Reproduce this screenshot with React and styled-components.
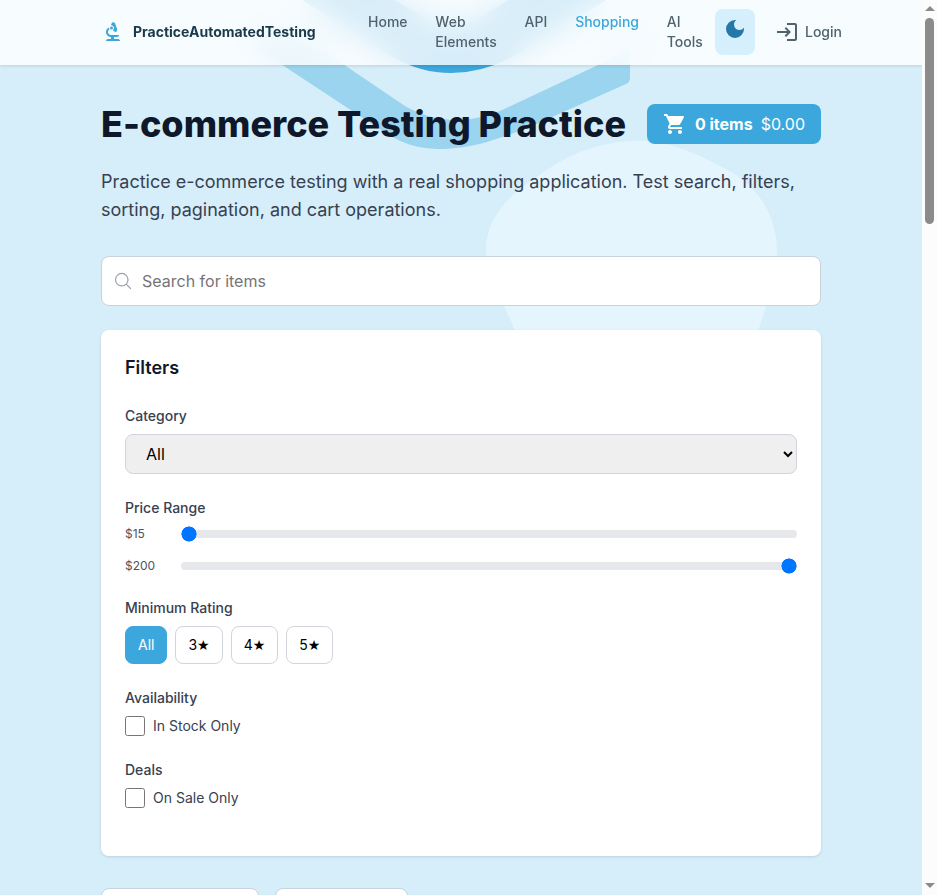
import React, { useState } from 'react';
import styled, { createGlobalStyle } from 'styled-components';
import { MdBiotech, MdDarkMode, MdLogin, MdShoppingCart } from 'react-icons/md';
import { HiOutlineMagnifyingGlass } from 'react-icons/hi2';

// Styling
const GlobalStyle = createGlobalStyle`
    * {
        box-sizing: border-box;
    }
    body {
        margin: 0;
        overflow: hidden;
        font-family: Inter, 'Liberation Sans', sans-serif;
        color: #374151;
    }
    button, input, select {
        font-family: inherit;
    }
    h1, h2, p {
        margin: 0;
    }
`;

const Viewport = styled.div`
    display: flex;
    height: 895px;
    overflow: hidden;
`;

const Page = styled.div`
    position: relative;
    flex: 1;
    min-width: 0;
    overflow: hidden;
    background-color: #d6eef9;
`;

const Backdrop = styled.svg`
    position: absolute;
    top: 0;
    left: 0;
`;

const Header = styled.header`
    position: relative;
    z-index: 2;
    display: flex;
    height: 65px;
    padding: 0 80px 2px 101px;
    background-color: rgba(255, 255, 255, 0.8);
    backdrop-filter: blur(14px);
    box-shadow: 0 1px 3px rgba(0, 0, 0, 0.12);
`;

const Brand = styled.a`
    display: flex;
    align-items: center;
    width: 267px;
    gap: 8px;
    font-size: 14px;
    font-weight: 700;
    color: #1a3a4a;
    svg {
        color: #3ba7dd;
    }
`;

const Nav = styled.nav`
    display: flex;
    gap: 27.8px;
    width: 335px;
    padding-top: 12px;
`;

const NavLink = styled.a`
    width: min-content;
    font-size: 14px;
    font-weight: 500;
    line-height: 20px;
    color: ${props => (props.$active ? '#3ba7dd' : '#4f636e')};
`;

const ThemeButton = styled.button`
    display: flex;
    justify-content: center;
    width: 40px;
    height: 46px;
    margin: 9px 0 0 12px;
    padding: 8px 0;
    border: none;
    border-radius: 8px;
    background-color: #d6effc;
    color: #2478a8;
`;

const LoginLink = styled.a`
    display: flex;
    align-items: center;
    gap: 6px;
    margin-left: 20px;
    font-size: 14px;
    font-weight: 500;
    color: #4f636e;
`;

const Main = styled.main`
    position: relative;
    display: flex;
    flex-direction: column;
    width: 720px;
    margin: 0 auto;
    padding-top: 36px;
`;

const TitleRow = styled.div`
    display: flex;
    align-items: center;
    justify-content: space-between;
    height: 46px;
`;

const Title = styled.h1`
    font-size: 36px;
    font-weight: 800;
    line-height: 46px;
    white-space: nowrap;
    color: #0f172a;
`;

const CartButton = styled.button`
    display: flex;
    align-items: center;
    width: 174px;
    height: 40px;
    padding: 0 16px;
    border: none;
    border-radius: 8px;
    background-color: #3ba7dd;
    color: #fff;
    font-size: 16px;
    white-space: nowrap;
    gap: 8px;
`;

const Intro = styled.p`
    margin-top: 21px;
    font-size: 18px;
    line-height: 28px;
`;

const SearchBox = styled.label`
    display: flex;
    align-items: center;
    gap: 9px;
    height: 50px;
    margin-top: 32px;
    padding: 0 11px;
    border: 1px solid #c9d3da;
    border-radius: 8px;
    background-color: #fff;
    color: #9ca3af;
`;

const SearchInput = styled.input`
    flex: 1;
    padding: 0;
    border: none;
    outline: none;
    font-size: 16px;
    &::placeholder {
        color: #757575;
    }
`;

const FilterCard = styled.section`
    display: flex;
    flex-direction: column;
    height: 526px;
    margin-top: 24px;
    padding: 24px;
    border-radius: 8px;
    background-color: #fff;
    box-shadow: 0 1px 3px rgba(0, 0, 0, 0.12);
`;

const FilterTitle = styled.h2`
    margin-bottom: 24px;
    font-size: 18px;
    font-weight: 600;
    line-height: 28px;
    color: #111827;
`;

const FilterGroup = styled.div`
    display: flex;
    flex-direction: column;
    margin-bottom: 24px;
`;

const Label = styled.span`
    margin-bottom: 8px;
    font-size: 14px;
    font-weight: 500;
    line-height: 20px;
`;

const Select = styled.select`
    height: 40px;
    padding: 0 16px;
    border: 1px solid #d1d5db;
    border-radius: 8px;
    background-color: #efefef;
    font-size: 16px;
    color: #000;
`;

const RangeRow = styled.div`
    display: flex;
    align-items: center;
    height: 16px;
    margin-bottom: ${props => (props.$last ? '0' : '16px')};
    font-size: 12px;
    line-height: 16px;
    color: #4b5563;
`;

const RangeValue = styled.span`
    width: 56px;
`;

const Range = styled.input`
    flex: 1;
    height: 8px;
    margin: 0;
    border-radius: 4px;
    background-color: #e5e7eb;
    appearance: none;
    &::-webkit-slider-thumb {
        appearance: none;
        width: 16px;
        height: 16px;
        border-radius: 50%;
        background: radial-gradient(circle, #0075ff 7.2px, transparent 7.9px);
    }
`;

const Ratings = styled.div`
    display: flex;
    gap: 8px;
`;

const RatingButton = styled.button`
    height: 38px;
    padding: 0 12px;
    border: 1px solid ${props => (props.$active ? '#3ba7dd' : '#d1d5db')};
    border-radius: 8px;
    background-color: ${props => (props.$active ? '#3ba7dd' : '#fff')};
    color: ${props => (props.$active ? '#fff' : '#000')};
    font-size: 14px;
    line-height: 20px;
`;

const Star = styled.span`
    font-family: 'DejaVu Sans', sans-serif;
    line-height: 1;
`;

const CheckRow = styled.label`
    display: flex;
    align-items: center;
    gap: 8px;
    height: 20px;
    font-size: 14px;
    line-height: 20px;
`;

const Checkbox = styled.input`
    width: 20px;
    height: 20px;
    margin: 0;
`;

const SortRow = styled.div`
    display: flex;
    gap: 16px;
    margin-top: 32px;
`;

const SortBox = styled.div`
    width: ${props => props.$width};
    height: 42px;
    border: 1px solid #c9d3da;
    border-radius: 8px;
    background-color: #fff;
`;

const Scrollbar = styled.div`
    display: flex;
    flex-direction: column;
    align-items: center;
    width: 15px;
    padding: 6px 0 7px;
    background-color: #fcfcfc;
`;

const Arrow = styled.div`
    border: 5px solid transparent;
    border-top-width: ${props => (props.$down ? '5px' : '0')};
    border-bottom-width: ${props => (props.$down ? '0' : '5px')};
    border-top-color: #8b8b8b;
    border-bottom-color: #8b8b8b;
`;

const Thumb = styled.div`
    width: 9px;
    height: 206px;
    margin: 7px 0 auto;
    border-radius: 5px;
    background-color: #8b8b8b;
`;

const links = [
    { label: 'Home' },
    { label: 'Web Elements' },
    { label: 'API' },
    { label: 'Shopping', active: true },
    { label: 'AI Tools' },
];

const ratings = [0, 3, 4, 5];

function PageHeader() {
    return (
        <Header>
            <Brand>
                <MdBiotech size={24} />
                PracticeAutomatedTesting
            </Brand>
            <Nav>
                {links.map(link => (
                    <NavLink key={link.label} $active={link.active}>
                        {link.label}
                    </NavLink>
                ))}
            </Nav>
            <ThemeButton aria-label="Toggle theme">
                <MdDarkMode size={24} />
            </ThemeButton>
            <LoginLink>
                <MdLogin size={24} />
                Login
            </LoginLink>
        </Header>
    );
}

function Filters() {
    const [rating, setRating] = useState(0);
    const [min, setMin] = useState(15);
    const [max, setMax] = useState(200);

    return (
        <FilterCard>
            <FilterTitle>Filters</FilterTitle>

            <FilterGroup>
                <Label>Category</Label>
                <Select>
                    <option>All</option>
                </Select>
            </FilterGroup>

            <FilterGroup>
                <Label>Price Range</Label>
                <RangeRow>
                    <RangeValue>${min}</RangeValue>
                    <Range type="range" min="15" max="200" value={min} onChange={e => setMin(e.target.value)} />
                </RangeRow>
                <RangeRow $last>
                    <RangeValue>${max}</RangeValue>
                    <Range type="range" min="15" max="200" value={max} onChange={e => setMax(e.target.value)} />
                </RangeRow>
            </FilterGroup>

            <FilterGroup>
                <Label>Minimum Rating</Label>
                <Ratings>
                    {ratings.map(item => (
                        <RatingButton key={item} $active={rating === item} onClick={() => setRating(item)}>
                            {item === 0 ? 'All' : item}
                            {item > 0 && <Star>★</Star>}
                        </RatingButton>
                    ))}
                </Ratings>
            </FilterGroup>

            <FilterGroup>
                <Label>Availability</Label>
                <CheckRow>
                    <Checkbox type="checkbox" />
                    In Stock Only
                </CheckRow>
            </FilterGroup>

            <FilterGroup>
                <Label>Deals</Label>
                <CheckRow>
                    <Checkbox type="checkbox" />
                    On Sale Only
                </CheckRow>
            </FilterGroup>
        </FilterCard>
    );
}

export default function App() {
    return (
        <>
            <GlobalStyle />
            <Viewport>
                <Page>
                    <Backdrop width="922" height="400" viewBox="0 0 922 400">
                        <path
                            fill="#e5f5fe"
                            d="M630 141C585 144 555 163 533 180C503 199 486 223 486 250C487 280 506 305 516 334C545 395 725 395 757 334C767 304 777 280 777 250C776 216 760 191 735 174C700 154 665 138 630 141Z"
                        />
                        <path
                            fill="#9bd4ef"
                            d="M255 30V47L384 132C409 148 426 149 445 149C480 148 510 134 532 126L626 84Q630 82 630 78V35H655L596 66L500 111C470 124 434 123 405 106L300 35Z"
                        />
                        <path
                            fill="#3ba7dd"
                            d="M270 -20L395 58Q421 73 451 73Q481 73 510 58L640 -20H540L480 18Q453 30 425 18L360 -20Z"
                        />
                    </Backdrop>
                    <PageHeader />
                    <Main>
                        <TitleRow>
                            <Title>E-commerce Testing Practice</Title>
                            <CartButton>
                                <MdShoppingCart size={24} />
                                <strong>0 items</strong>
                                <span>$0.00</span>
                            </CartButton>
                        </TitleRow>
                        <Intro>
                            Practice e-commerce testing with a real shopping application. Test search, filters,
                            sorting, pagination, and cart operations.
                        </Intro>
                        <SearchBox>
                            <HiOutlineMagnifyingGlass size={20} />
                            <SearchInput placeholder="Search for items" />
                        </SearchBox>
                        <Filters />
                        <SortRow>
                            <SortBox $width="158px" />
                            <SortBox $width="133px" />
                        </SortRow>
                    </Main>
                </Page>
                <Scrollbar>
                    <Arrow />
                    <Thumb />
                    <Arrow $down />
                </Scrollbar>
            </Viewport>
        </>
    );
}
